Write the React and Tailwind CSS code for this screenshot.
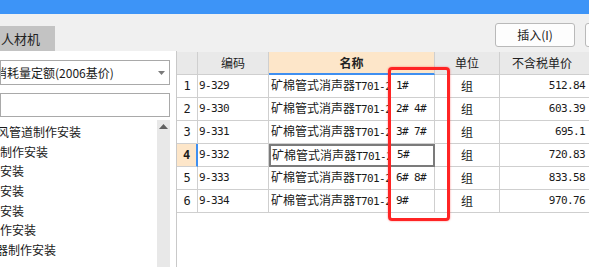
import React from "react";

const rows = [
  { no: 1, code: "9-329", tag: "1#", price: "512.84" },
  { no: 2, code: "9-330", tag: "2# 4#", price: "603.39" },
  { no: 3, code: "9-331", tag: "3# 7#", price: "695.1" },
  { no: 4, code: "9-332", tag: "5#", price: "720.83", active: true },
  { no: 5, code: "9-333", tag: "6# 8#", price: "833.58" },
  { no: 6, code: "9-334", tag: "9#", price: "970.76" },
];

const tree = [
  { text: "风管道制作安装", off: "ml-[-3px]" },
  { text: "制作安装", off: "" },
  { text: "安装", off: "" },
  { text: "安装", off: "" },
  { text: "安装", off: "" },
  { text: "作安装", off: "" },
  { text: "器制作安装", off: "ml-[-4px]" },
];

const cjk = "font-['Noto_Sans_CJK_SC','Noto_Sans',sans-serif]";
const mono = "font-['DejaVu_Sans_Mono','Liberation_Mono',monospace]";

export default function App() {
  return (
    <div className={`relative w-[589px] h-[267px] overflow-hidden bg-[#f0f0f0] text-[#1a1a1a] ${cjk}`}>
      {/* Title bar */}
      <div className="h-[14px] bg-[#3d94f7]" />

      {/* Toolbar */}
      <div className="flex h-[37px]">
        <div className="w-[177px] flex items-end">
          <div className="h-[25px] w-[55px] bg-[#c3c3c3] flex items-center">
            <span className="ml-[1px] text-[13px] leading-none text-[#222]">人材机</span>
          </div>
        </div>
        <div className="flex-1 flex items-start justify-end pt-[9px]">
          <button className="h-[24px] w-[80px] rounded-[3px] border border-[#b9b9b9] bg-[#fdfdfd] text-[12px] text-[#222]">
            插入(I)
          </button>
          <div className="ml-[10px] mr-[-20px] h-[24px] w-[24px] rounded-[3px] border border-[#b9b9b9] bg-[#fdfdfd]" />
        </div>
      </div>

      {/* Body */}
      <div className="flex h-[216px]">
        {/* Left panel */}
        <div className="w-[177px] shrink-0 bg-white border-r border-[#c9c9c9] flex flex-col">
          <div className="pt-[9px] w-[170px]">
            <div className="h-[25px] border border-[#a9a9a9] flex items-center justify-between overflow-hidden">
              <span className="ml-[-6px] whitespace-nowrap text-[12px] text-[#1a1a1a]">消耗量定额(2006基价)</span>
              <svg width="7" height="4" viewBox="0 0 7 4" className="mr-[4px]">
                <path d="M0 0h7L3.5 4z" fill="#7a7a7a" />
              </svg>
            </div>
            <div className="mt-[8px] h-[24px] border border-[#a9a9a9]" />
          </div>
          <div className="flex flex-1 mt-[3px] w-[170px]">
            <div className="flex-1 pt-[2px] overflow-hidden">
              {tree.map((t, i) => (
                <div key={i} className={`h-[19.7px] leading-[19.7px] whitespace-nowrap text-[12px] text-[#1a1a1a] ${t.off}`}>
                  {t.text}
                </div>
              ))}
            </div>
            <div className="w-[13px] bg-[#e8e8e8] flex justify-center pt-[4px]">
              <svg width="9" height="5" viewBox="0 0 9 5">
                <path d="M0 5L4.5 0L9 5z" fill="#606060" />
              </svg>
            </div>
          </div>
        </div>

        {/* Table */}
        <div className="flex-1 flex flex-col">
          <div className="h-[1px] bg-[#f0f0f0]" />
          <div className="flex-1 bg-white">
            <div className="grid grid-cols-[21px_71px_166px_65px_100px] text-[12px]">
              {/* Header */}
              <div className="h-[23px] bg-[#e9e9e9] border-r border-b border-[#cfcfcf]" />
              <div className="h-[23px] bg-[#e9e9e9] border-r border-b border-[#cfcfcf] flex items-center justify-center text-[#222]">编码</div>
              <div className="h-[23px] bg-[#fde6c9] border-r border-b-2 border-b-[#3f8ff0] border-r-[#cfcfcf] flex items-center justify-center font-bold text-[#222]">名称</div>
              <div className="h-[23px] bg-[#e9e9e9] border-r border-b border-[#cfcfcf] flex items-center justify-center text-[#222]">单位</div>
              <div className="h-[23px] bg-[#e9e9e9] border-b border-[#cfcfcf] flex items-center pl-[12px] text-[#222]">不含税单价</div>

              {rows.map((r) => (
                <React.Fragment key={r.no}>
                  <div
                    className={`h-[23px] border-b border-[#cfcfcf] flex items-center justify-center ${mono} ${
                      r.active
                        ? "bg-[#fde6c9] font-bold border-r-2 border-r-[#3f8ff0]"
                        : "border-r border-r-[#cfcfcf]"
                    }`}
                  >
                    {r.no}
                  </div>
                  <div className={`h-[23px] border-r border-b border-[#cfcfcf] flex items-center pl-[1px] text-[11px] tracking-[-0.6px] ${mono}`}>
                    {r.code}
                  </div>
                  <div
                    className={`h-[23px] flex items-center whitespace-nowrap ${
                      r.active ? "border-2 border-[#7b7b7b] pl-[1px]" : "border-r border-b border-[#cfcfcf] pl-[2px]"
                    }`}
                  >
                    <span className="w-[119px] overflow-hidden">
                      矿棉管式消声器<span className={`${mono} text-[11px] tracking-[-0.6px]`}>T701-2</span>
                    </span>
                    <span className={`ml-[6px] text-[11px] tracking-[-0.6px] whitespace-pre ${mono}`}>{r.tag}</span>
                  </div>
                  <div className="h-[23px] border-r border-b border-[#cfcfcf] flex items-center justify-center">组</div>
                  <div className={`h-[23px] border-b border-[#cfcfcf] flex items-center justify-end pr-[15px] text-[11px] tracking-[-0.6px] ${mono}`}>
                    {r.price}
                  </div>
                </React.Fragment>
              ))}
            </div>
          </div>
        </div>
      </div>

      {/* Red annotation box */}
      <div className="absolute left-[388px] top-[67px] w-[62px] h-[154px] rounded-[4px] border-[3px] border-[#ff2424] shadow-[0_0_2px_rgba(255,40,40,0.6)]" />
    </div>
  );
}
